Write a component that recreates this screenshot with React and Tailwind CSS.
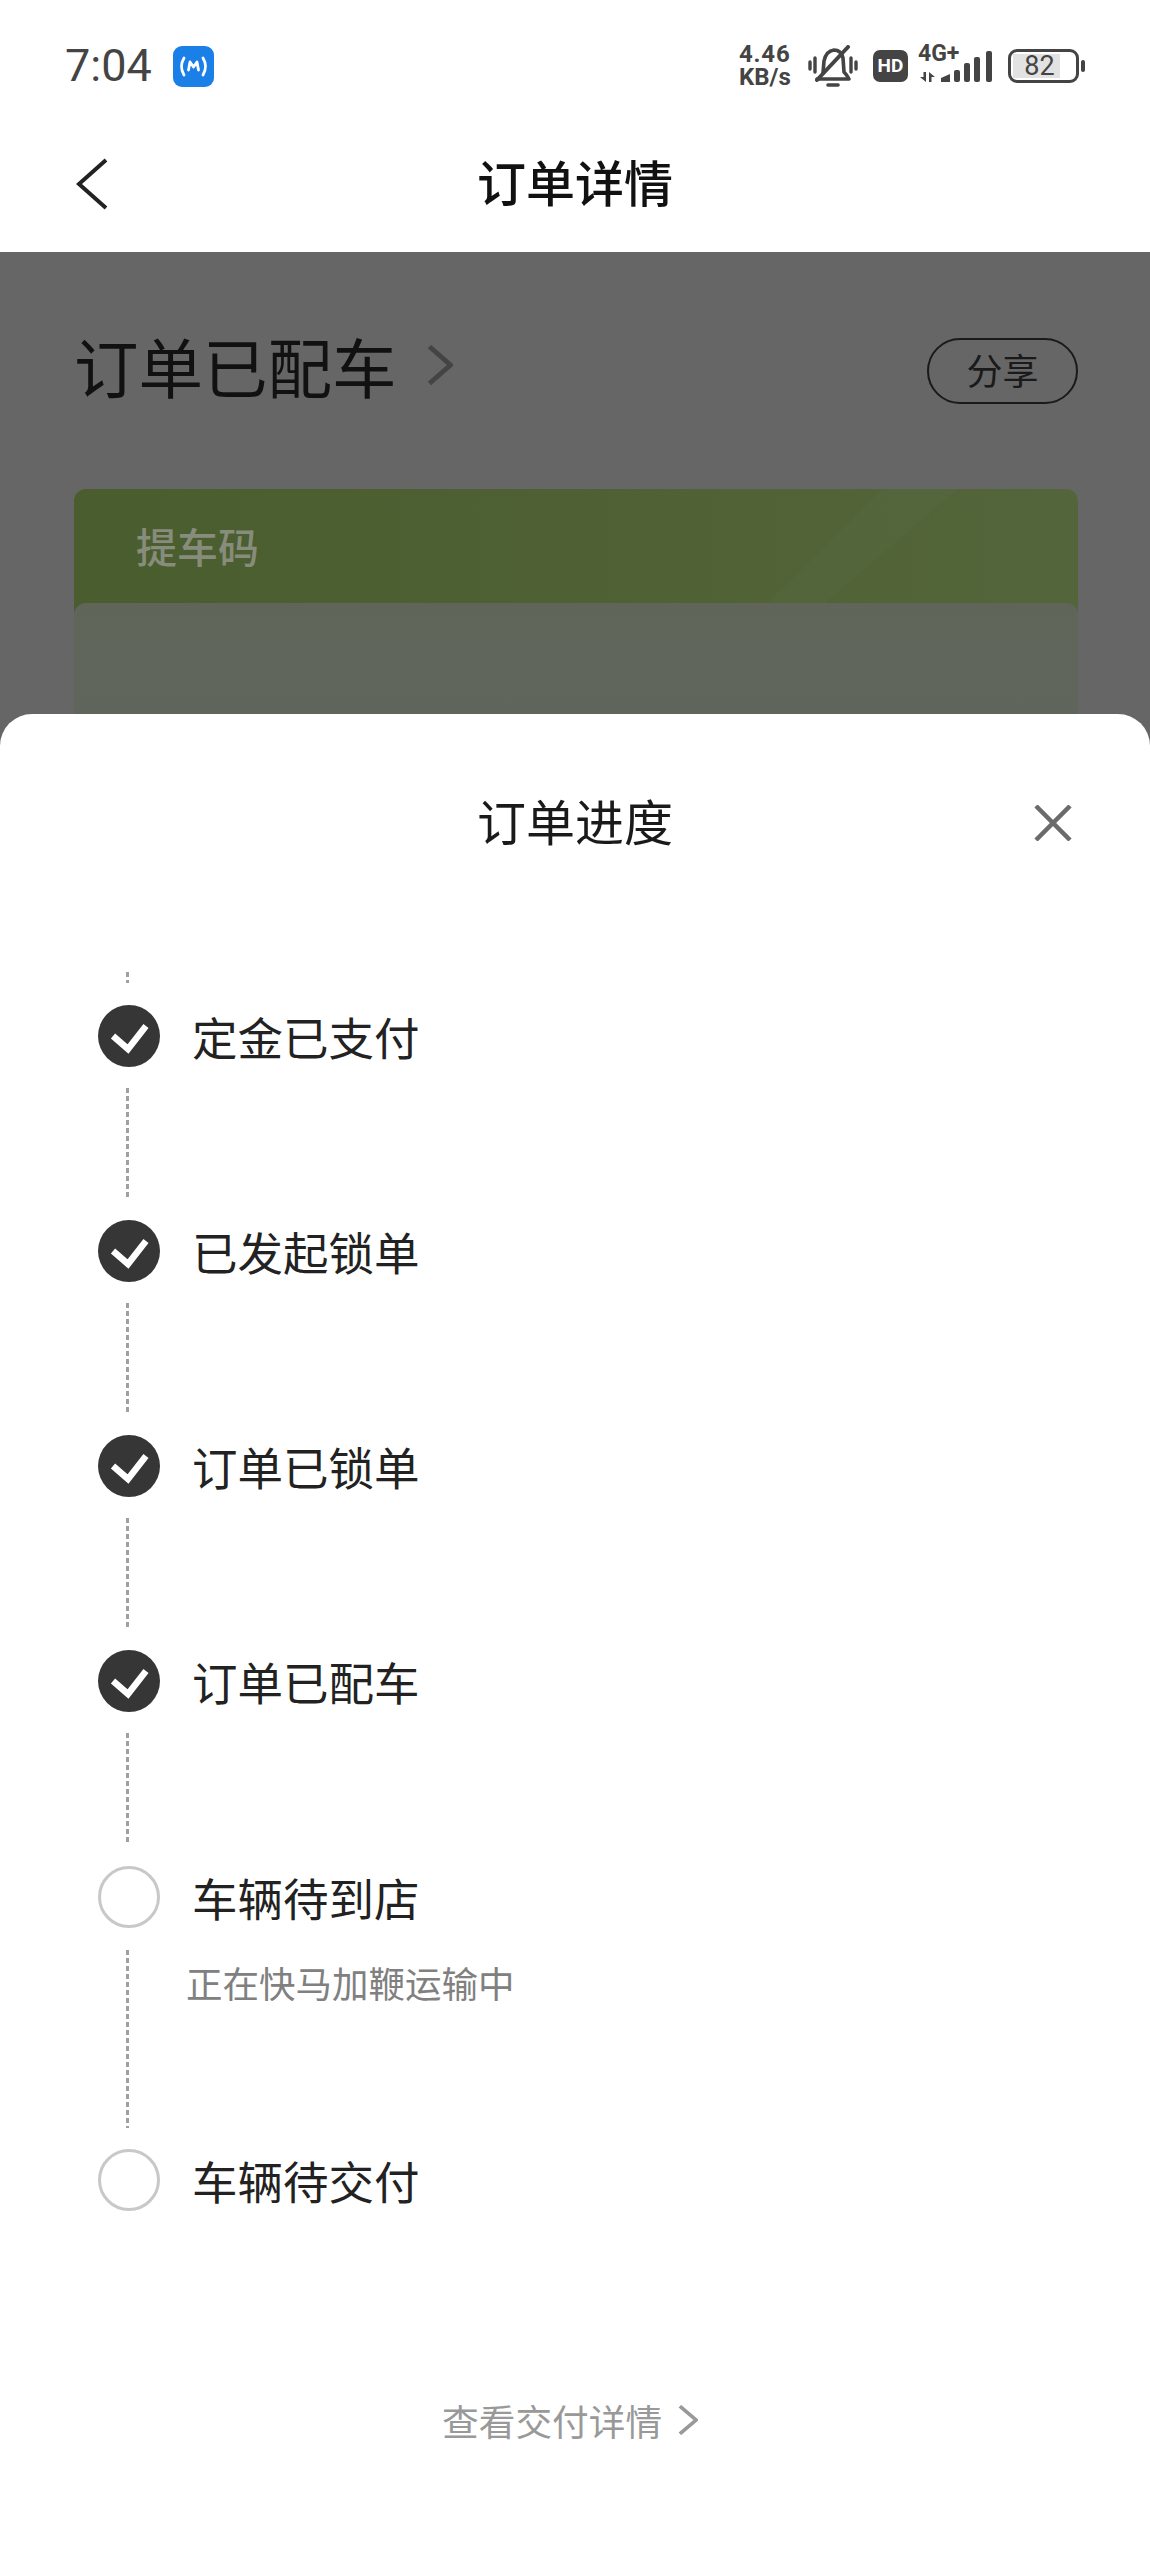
const cjk = { fontFamily: '"Noto Sans CJK SC", "Noto Sans", sans-serif' };

function Chevron({ className, color = "#222", width = 4, flip = false }) {
  return (
    <svg className={className} viewBox="0 0 32 52" fill="none" preserveAspectRatio="none">
      <path d={flip ? "M30 2 L3 26 L30 50" : "M3 2 L29 26 L3 50"} stroke={color} strokeWidth={width} />
    </svg>
  );
}

function StatusBar() {
  return (
    <div className="h-[92px] flex items-start justify-between pt-[46px] pl-[65px] pr-[65px]">
      <div className="flex items-center h-[40px] gap-[21px]">
        <span className="text-[45px] leading-[40px] text-[#444]" style={{ fontFamily: "Roboto, sans-serif" }}>7:04</span>
        <svg className="w-[41px] h-[41px]" viewBox="0 0 41 41">
          <rect width="41" height="41" rx="9" fill="#1a7fe6" />
          <path d="M11 12 Q6 20.5 11 29 M30 12 Q35 20.5 30 29" stroke="#fff" strokeWidth="2.8" fill="none" strokeLinecap="round" />
          <path d="M15.5 24 L17 16 L20.5 21 L24 16 L25.5 24" stroke="#fff" strokeWidth="2.8" fill="none" strokeLinejoin="round" strokeLinecap="round" />
        </svg>
      </div>
      <div className="flex items-start text-[#444]" style={{ fontFamily: "Roboto, sans-serif" }}>
        <div className="w-[56px] mr-[13px] flex flex-col font-bold text-[24px] leading-[23px] -ml-[2px] -mt-[3px]">
          <span className="tracking-[0.8px]">4.46</span>
          <span>KB/s</span>
        </div>
        <svg className="w-[50px] h-[44px] mr-[15px] -mt-[1px]" viewBox="0 0 50 44" fill="none" stroke="#444" strokeLinecap="round">
          <path d="M15 28 L16 16 Q18 6 26 5 Q33 5 35 13 L36 27 Q39 30 41 34 H9" strokeWidth="3.6" strokeLinejoin="round" />
          <path d="M9 35 L40 2" strokeWidth="4" />
          <path d="M20 40 H30" strokeWidth="3.6" />
          <path d="M2 17 V24 M7 13 V27 M43 13 V27 M48 17 V24" strokeWidth="3.4" />
        </svg>
        <div className="w-[35px] h-[32px] mt-[4px] mr-[10px] rounded-[7px] bg-[#444] text-white text-[19px] font-bold leading-[32px] text-center">HD</div>
        <div className="w-[75px] mr-[15px] flex flex-col">
          <span className="font-bold text-[23px] leading-[18px] -mt-[1px]">4G+</span>
          <svg className="w-[75px] h-[32px] -mt-[12px]" viewBox="0 0 75 32" fill="#444">
            <path d="M8 21 V31 L2 26 H5.5 V21 Z M11 31 V21 L17 26 H13.5 V31 Z" />
            <path d="M23 31 V27 L32 23 V31 Z" />
            <rect x="36" y="19" width="6" height="12" rx="2" />
            <rect x="46" y="12" width="6" height="19" rx="2" />
            <rect x="56" y="6" width="6" height="25" rx="2" />
            <rect x="68" y="0" width="6" height="31" rx="2" />
          </svg>
        </div>
        <div className="flex items-center mt-[3px]">
          <div className="w-[71px] h-[34px] rounded-[9px] border-[3px] border-[#444] p-[2px]">
            <div className="w-[47px] h-full bg-[#e2e2e2] text-[27px] leading-[24px] text-center font-normal pl-[6px] text-[#444]">82</div>
          </div>
          <div className="w-[4px] h-[12px] ml-[2px] rounded-[2px] bg-[#444]" />
        </div>
      </div>
    </div>
  );
}

function NavBar() {
  return (
    <div className="h-[160px] grid grid-cols-[1fr_auto_1fr] items-start pl-[76px]">
      <Chevron className="w-[32px] h-[52px] mt-[66px]" flip color="#222" width={4} />
      <div className="text-[49px] leading-[68px] mt-[55px] font-medium text-[#111] -ml-[76px]" style={cjk}>订单详情</div>
      <div />
    </div>
  );
}

function Backdrop() {
  return (
    <div className="h-[462px] overflow-hidden pl-[74px] pr-[72px]">
      <div className="flex items-start justify-between pt-[86px] h-[237px]">
        <div className="flex items-center">
          <span className="text-[64.5px] leading-[54px] text-[#111]" style={cjk}>订单已配车</span>
          <Chevron className="w-[26px] h-[40px] ml-[30px]" color="#444" width={6} />
        </div>
        <div className="w-[151px] h-[66px] rounded-full border-2 border-[#1a1a1a] flex items-center justify-center text-[36px] leading-[58px] pb-[5px] text-[#1a1a1a]" style={cjk}>分享</div>
      </div>
      <div className="h-[400px] rounded-[12px] bg-gradient-to-r from-[#4a5d2e] to-[#53653a] relative overflow-hidden">
        <div className="h-[114px] pl-[62px] pt-[26px] text-[41px] leading-[60px] font-medium text-[#878c7c]" style={cjk}>提车码</div>
        <div className="h-[286px] rounded-[12px] bg-gradient-to-b from-[#5f6659] to-[#62645f]" />
        <div className="absolute top-0 right-[120px] w-[190px] h-[114px] bg-[#5a6b45] opacity-35 [clip-path:polygon(60%_0,100%_0,30%_100%,0_100%)]" />
      </div>
    </div>
  );
}

function Dash({ height, mt = 0, mb = 0 }) {
  return (
    <div
      className="w-[3px] -translate-x-[2px] bg-[repeating-linear-gradient(to_bottom,#a0a0a0_0,#a0a0a0_5px,transparent_5px,transparent_8px)]"
      style={{ height, marginTop: mt, marginBottom: mb }}
    />
  );
}

function Step({ label, done, lineH, sub, gapA = 21, gapB = 20 }) {
  return (
    <div className="flex items-start">
      <div className="w-[62px] flex flex-col items-center shrink-0">
        {done ? (
          <svg className="w-[62px] h-[62px]" viewBox="0 0 62 62">
            <circle cx="31" cy="31" r="31" fill="#363636" />
            <path d="M15 31 L30 44 L48 21" fill="none" stroke="#fff" strokeWidth="6.5" />
          </svg>
        ) : (
          <div className="w-[62px] h-[62px] rounded-full border-[3px] border-[#c8c8c8]" />
        )}
        {lineH ? <Dash height={lineH} mt={gapA} mb={gapB} /> : null}
      </div>
      <div className="ml-[33px] flex flex-col">
        <div className="text-[45.5px] leading-[62px] text-[#222] -ml-[1px]" style={cjk}>{label}</div>
        {sub ? <div className="-ml-[7px] mt-[30px] text-[36.5px] leading-[50px] text-[#808080]" style={cjk}>{sub}</div> : null}
      </div>
    </div>
  );
}

function Sheet() {
  return (
    <div className="h-[1845px] bg-white rounded-t-[32px]">
      <div className="grid grid-cols-[1fr_auto_1fr] items-center h-[217px] pb-[6px] pr-[78px]">
        <div />
        <div className="text-[49px] leading-[68px] text-[#1a1a1a] ml-[78px]" style={cjk}>订单进度</div>
        <svg className="w-[38px] h-[36px] justify-self-end mt-[6px]" viewBox="0 0 38 36" fill="none" stroke="#6b6b6b" strokeWidth="4.5">
          <path d="M2 1 L36 35 M36 1 L2 35" />
        </svg>
      </div>
      <div className="pl-[98px] pt-[41px]">
        <div className="w-[62px] flex flex-col items-center h-[33px]">
          <Dash height={11} />
        </div>
        <Step label="定金已支付" done lineH={112} />
        <Step label="已发起锁单" done lineH={112} />
        <Step label="订单已锁单" done lineH={112} />
        <Step label="订单已配车" done lineH={112} gapB={21} />
        <Step label="车辆待到店" lineH={178} gapA={22} gapB={21} sub="正在快马加鞭运输中" />
        <Step label="车辆待交付" />
      </div>
      <div className="flex items-center ml-[442px] mt-[183px]">
        <span className="text-[36.7px] leading-[52px] text-[#999]" style={cjk}>查看交付详情</span>
        <Chevron className="w-[20px] h-[30px] ml-[16px]" color="#999" width={6} />
      </div>
    </div>
  );
}

export default function App() {
  return (
    <div className="w-[1150px] h-[2559px] flex flex-col overflow-hidden bg-white">
      <StatusBar />
      <NavBar />
      <div className="flex-1 bg-[#666666]">
        <Backdrop />
        <Sheet />
      </div>
    </div>
  );
}
